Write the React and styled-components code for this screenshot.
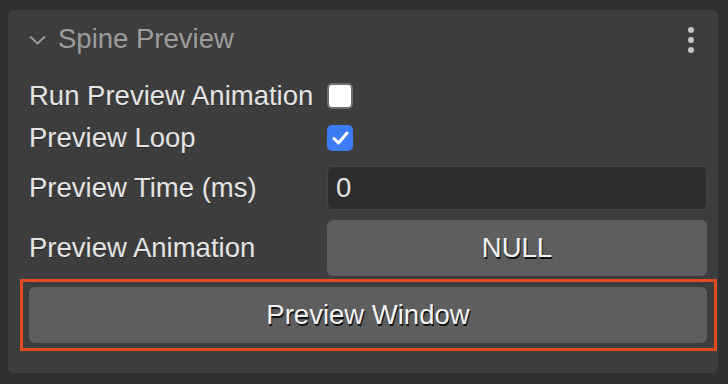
import React from "react";
import styled, { createGlobalStyle } from "styled-components";

const GlobalStyle = createGlobalStyle`
  html, body {
    margin: 0;
    padding: 0;
    background: #303030;
  }
  body {
    font-family: "Liberation Sans", Arial, sans-serif;
  }
`;

const Page = styled.div`
  width: 728px;
  height: 384px;
  box-sizing: border-box;
  padding: 10px 10px 11px 8px;
  background: #303030;
`;

const Panel = styled.section`
  box-sizing: border-box;
  width: 710px;
  height: 363px;
  background: #3d3d3d;
  border-radius: 6px;
  padding: 0 11px 0 21px;
  display: flex;
  flex-direction: column;
`;

const Header = styled.div`
  height: 65px;
  display: flex;
  align-items: center;
  padding-bottom: 8px;
  box-sizing: border-box;
`;

const Chevron = styled.svg`
  width: 17px;
  height: 10px;
  margin-right: 12px;
  margin-top: 2px;
`;

const Title = styled.span`
  flex: 1;
  font-size: 27.5px;
  color: #9c9c9c;
`;

const MoreButton = styled.div`
  display: flex;
  flex-direction: column;
  gap: 4px;
  margin-right: 13px;
  margin-top: 2px;

  span {
    width: 6px;
    height: 6px;
    border-radius: 50%;
    background: #c4c4c4;
  }
`;

const Row = styled.div`
  height: ${(p) => p.$h}px;
  display: grid;
  grid-template-columns: 298px 1fr;
  align-items: center;
`;

const Label = styled.span`
  font-size: 27.5px;
  color: #e4e4e4;
  white-space: nowrap;
  text-shadow: 0 1px 0 rgba(0, 0, 0, 0.35);
`;

const Check = styled.div`
  width: 26px;
  height: 26px;
  box-sizing: border-box;
  border-radius: 5px;
  background: ${(p) => (p.$on ? "#3b7bf4" : "#ffffff")};
  border: 2px solid ${(p) => (p.$on ? "#3b7bf4" : "#6e6e6e")};
  display: flex;
  align-items: center;
  justify-content: center;
`;

const Input = styled.div`
  height: 44px;
  box-sizing: border-box;
  background: #2d2d2d;
  border: 1px solid #454545;
  border-radius: 6px;
  padding-left: 8px;
  display: flex;
  align-items: center;
  font-size: 27.5px;
  color: #e4e4e4;
`;

const Button = styled.div`
  height: 56px;
  background: #5e5e5e;
  border-radius: 6px;
  display: flex;
  align-items: center;
  justify-content: center;
  font-size: 27.5px;
  color: #f4f4f4;
  text-shadow: 1px 2px 0 #111;
`;

const Highlight = styled.div`
  margin: 0 -10px 0 -9px;
  border: 3px solid #e24a1f;
  padding: 5px 7px 5px 6px;
`;

export default function App() {
  return (
    <>
      <GlobalStyle />
      <Page>
        <Panel>
          <Header>
            <Chevron viewBox="0 0 17 10">
              <path d="M1 1.5 L8.5 8.5 L16 1.5" fill="none" stroke="#9c9c9c" strokeWidth="1.8" />
            </Chevron>
            <Title>Spine Preview</Title>
            <MoreButton>
              <span />
              <span />
              <span />
            </MoreButton>
          </Header>
          <Row $h={42}>
            <Label>Run Preview Animation</Label>
            <Check />
          </Row>
          <Row $h={42}>
            <Label>Preview Loop</Label>
            <Check $on>
              <svg width="17" height="14" viewBox="0 0 17 14">
                <path d="M2 7.5 L6.5 12 L15 2" fill="none" stroke="#fff" strokeWidth="3" strokeLinecap="round" strokeLinejoin="round" />
              </svg>
            </Check>
          </Row>
          <Row $h={58}>
            <Label>Preview Time (ms)</Label>
            <Input>0</Input>
          </Row>
          <Row $h={62}>
            <Label>Preview Animation</Label>
            <Button>NULL</Button>
          </Row>
          <Highlight>
            <Button>Preview Window</Button>
          </Highlight>
        </Panel>
      </Page>
    </>
  );
}
